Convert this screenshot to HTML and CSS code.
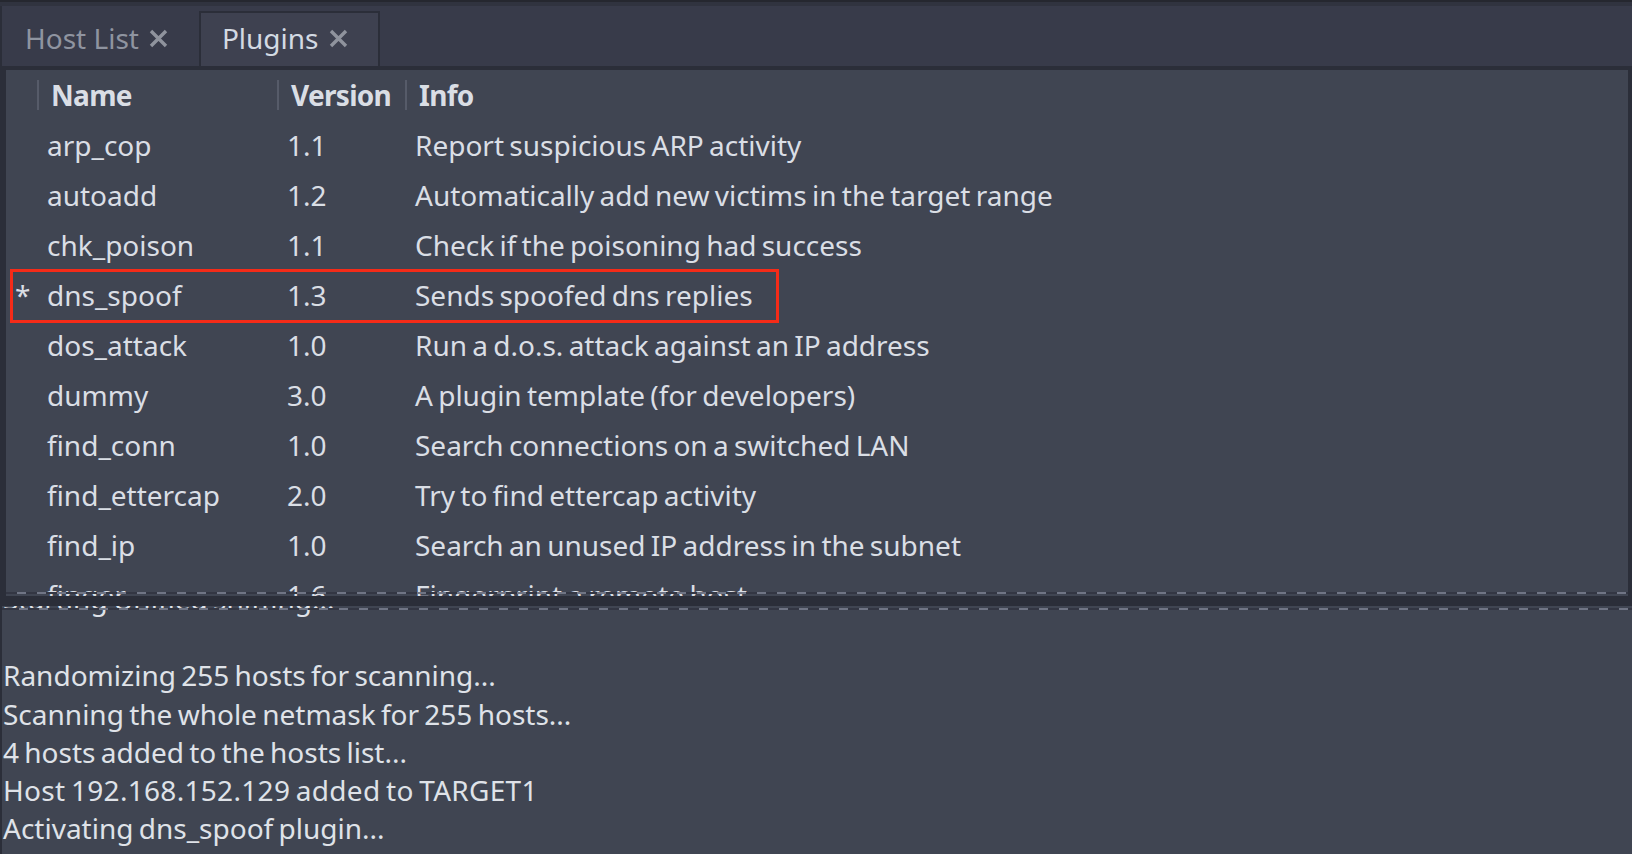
FILE: index.html
```html
<!DOCTYPE html>
<html lang="en">
<head>
<meta charset="utf-8">
<title>Plugins</title>
<link rel="stylesheet" href="styles.css">
</head>
<body>
<div class="top-strip"></div>
<div class="tabbar">
  <div class="tab">
    <span class="tab-label">Host List</span>
    <svg class="tab-close" width="19" height="19" viewBox="0 0 19 19"><path d="M2 2L17 17M17 2L2 17"/></svg>
  </div>
  <div class="tab tab-active">
    <span class="tab-label">Plugins</span>
    <svg class="tab-close" width="19" height="19" viewBox="0 0 19 19"><path d="M2 2L17 17M17 2L2 17"/></svg>
  </div>
</div>

<div class="plugins">
  <div class="thead">
    <div class="th"></div>
    <div class="th"><span class="sep"></span><span>Name</span></div>
    <div class="th"><span class="sep"></span><span>Version</span></div>
    <div class="th"><span class="sep"></span><span>Info</span></div>
  </div>
  <div class="tr"><div class="mark"></div><div class="td">arp_cop</div><div class="td">1.1</div><div class="td info">Report suspicious ARP activity</div></div>
  <div class="tr"><div class="mark"></div><div class="td">autoadd</div><div class="td">1.2</div><div class="td info">Automatically add new victims in the target range</div></div>
  <div class="tr"><div class="mark"></div><div class="td">chk_poison</div><div class="td">1.1</div><div class="td info">Check if the poisoning had success</div></div>
  <div class="tr tr-marked"><div class="mark">*</div><div class="td">dns_spoof</div><div class="td">1.3</div><div class="td info">Sends spoofed dns replies</div></div>
  <div class="tr"><div class="mark"></div><div class="td">dos_attack</div><div class="td">1.0</div><div class="td info">Run a d.o.s. attack against an IP address</div></div>
  <div class="tr"><div class="mark"></div><div class="td">dummy</div><div class="td">3.0</div><div class="td info">A plugin template (for developers)</div></div>
  <div class="tr"><div class="mark"></div><div class="td">find_conn</div><div class="td">1.0</div><div class="td info">Search connections on a switched LAN</div></div>
  <div class="tr"><div class="mark"></div><div class="td">find_ettercap</div><div class="td">2.0</div><div class="td info">Try to find ettercap activity</div></div>
  <div class="tr"><div class="mark"></div><div class="td">find_ip</div><div class="td">1.0</div><div class="td info">Search an unused IP address in the subnet</div></div>
  <div class="tr"><div class="mark"></div><div class="td">finger</div><div class="td">1.6</div><div class="td info">Fingerprint a remote host</div></div>
  <div class="undershoot undershoot-bottom"></div>
</div>

<div class="log">
  <div class="log-text">
    <div class="line">Starting Unified sniffing...</div>
    <div class="line">&nbsp;</div>
    <div class="line">Randomizing 255 hosts for scanning...</div>
    <div class="line">Scanning the whole netmask for 255 hosts...</div>
    <div class="line">4 hosts added to the hosts list...</div>
    <div class="line wide">Host 192.168.152.129 added to TARGET1</div>
    <div class="line">Activating dns_spoof plugin...</div>
  </div>
  <div class="undershoot undershoot-top"></div>
</div>
</body>
</html>
```
FILE: styles.css
```css
* { box-sizing: border-box; }

html, body {
  margin: 0;
  height: 854px;
  overflow: hidden;
}

body {
  background: #2b2e39;
  font-family: "Noto Sans", "Open Sans", sans-serif;
  font-size: 28px;
  color: #dadee5;
}

.top-strip {
  height: 6px;
  background: #30333f;
  border-top: 2px solid #25272f;
}

/* ---- tabs ---- */
.tabbar {
  height: 64px;
  margin-left: 2px;
  background: #383b4a;
  border-bottom: 4px solid #2b2e39;
  display: flex;
  align-items: flex-end;
}

.tab {
  height: 55px;
  display: flex;
  align-items: center;
  gap: 10px;
  padding: 0 31px 2px 23px;
  color: #8f94a0;
}

.tab-active {
  background: #3e4150;
  border: 2px solid #2b2e39;
  border-bottom: none;
  padding: 0 30px 4px 21px;
  color: #d3dae3;
}

.tab-label {
  line-height: 1;
  white-space: nowrap;
}

.tab-close {
  flex: none;
  margin-top: 2px;
}

.tab-close path {
  stroke: #8f939d;
  stroke-width: 3.4;
  fill: none;
}

/* ---- plugin table ---- */
.plugins {
  position: relative;
  height: 526px;
  margin: 0 4px 0 6px;
  background: #404552;
  overflow: hidden;
}

.thead,
.tr {
  display: grid;
  grid-template-columns: 31px 240px 128px 1fr;
}

.thead {
  height: 50px;
  font-weight: 700;
  letter-spacing: -0.7px;
}

.th {
  display: flex;
  align-items: center;
  gap: 12px;
  white-space: nowrap;
}

.sep {
  width: 2px;
  height: 30px;
  background: #565b69;
}

.tr {
  height: 50px;
  line-height: 50px;
  white-space: nowrap;
}

.td {
  padding-left: 10px;
}

.info {
  word-spacing: -2px;
}

.mark {
  padding-left: 9px;
}

.tr-marked {
  position: relative;
}

.tr-marked::after {
  content: "";
  position: absolute;
  left: 4px;
  top: -1px;
  width: 763px;
  height: 48px;
  border: 3px solid #f52b18;
}

/* dashed scroll-edge indicators */
.undershoot {
  position: absolute;
  left: 0;
  right: 0;
  height: 2px;
  background: repeating-linear-gradient(90deg, #333643 0 11px, #707585 11px 20px);
}

.undershoot-bottom {
  bottom: 2px;
}

.undershoot-top {
  top: 2px;
  background-position: 6px 0;
}

/* ---- log ---- */
.log {
  position: relative;
  height: 248px;
  margin: 10px 0 0 2px;
  background: #404552;
  overflow: hidden;
}

.log-text {
  margin-top: -26px;
  padding-left: 1px;
  line-height: 38.2px;
  word-spacing: -2px;
  color: #dfe2e8;
  white-space: nowrap;
}

.wide {
  letter-spacing: 0.3px;
}
```
